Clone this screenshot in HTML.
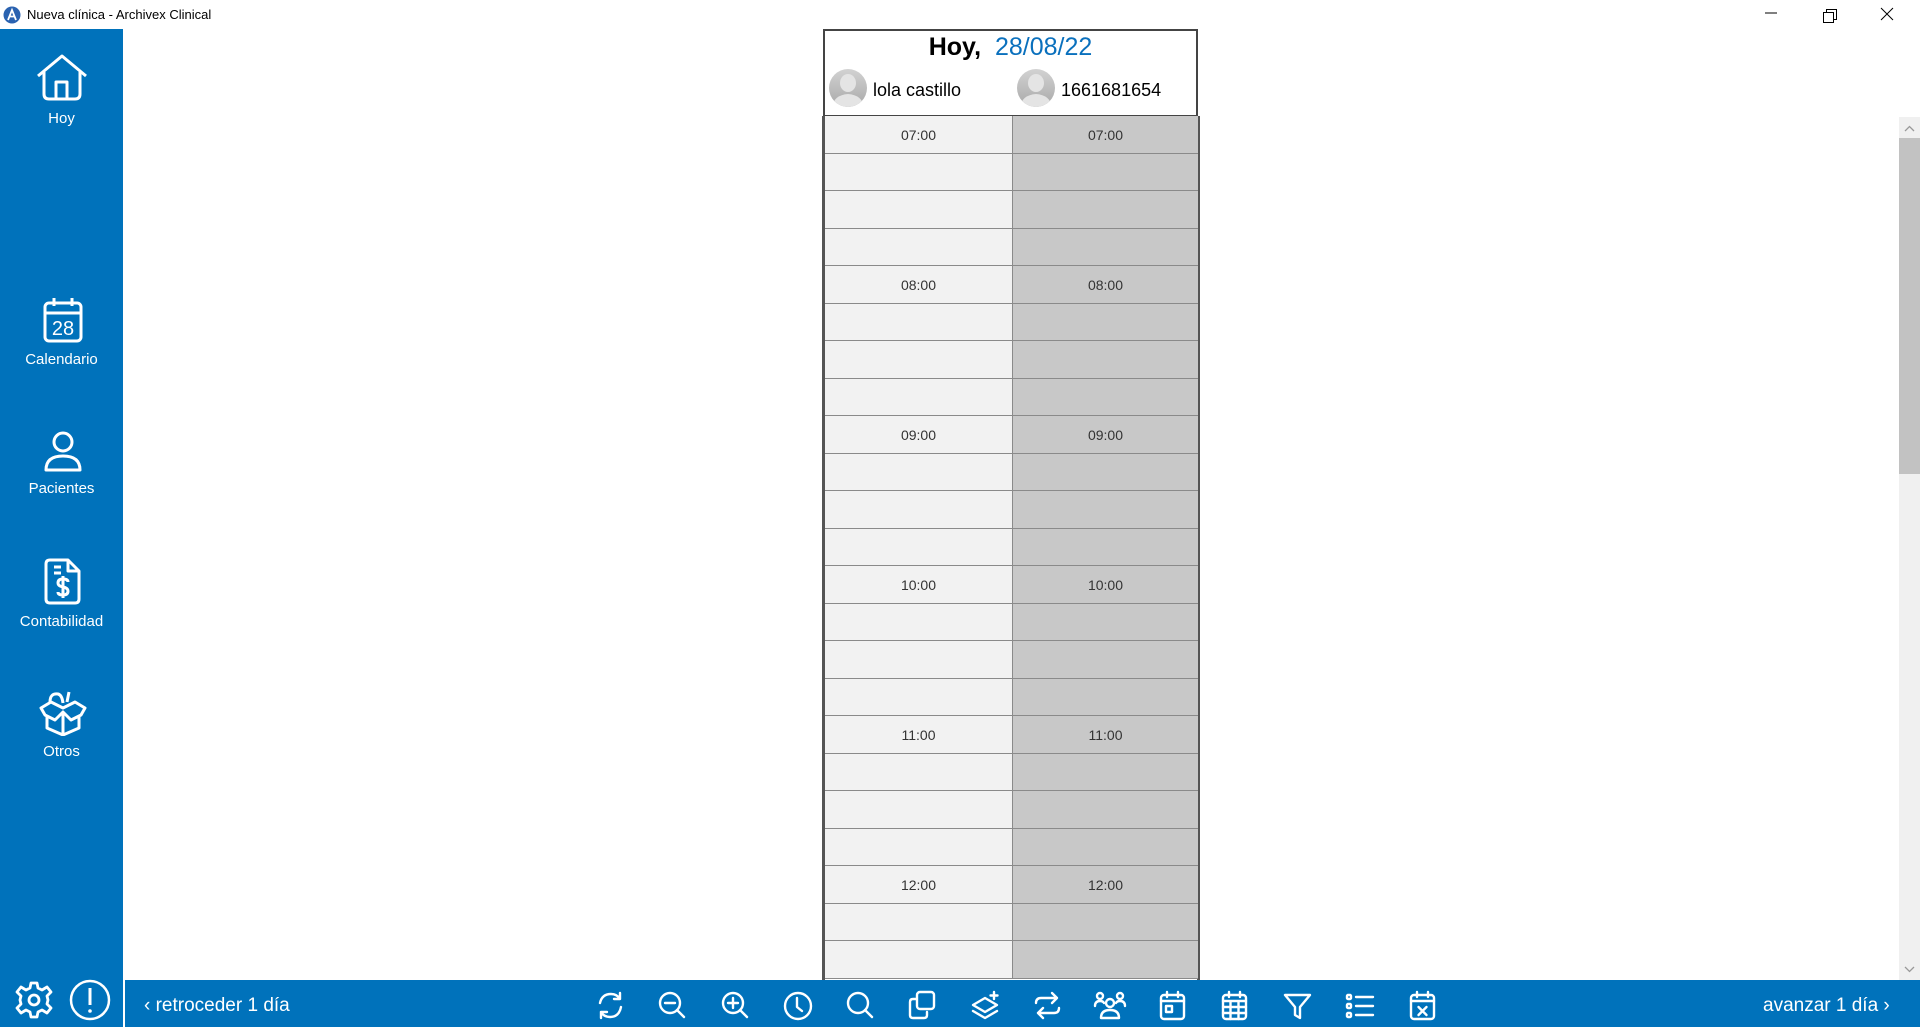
<!DOCTYPE html>
<html><head><meta charset="utf-8"><style>
*{margin:0;padding:0;box-sizing:border-box}
body{width:1920px;height:1027px;position:relative;overflow:hidden;background:#fff;font-family:"Segoe UI","Liberation Sans",sans-serif}
.a{position:absolute}
#side{left:0;top:29px;width:123px;height:998px;background:#0072bb}
.lab{position:absolute;left:0;width:123px;text-align:center;color:#fff;font-size:15px}
#bar{left:125px;top:980px;width:1795px;height:47px;background:#0072bb}
.row{position:absolute;left:825px;width:373px;height:37.5px;border-bottom:1px solid #8a8a8a}
.row .l{position:absolute;left:0;top:0;width:187px;height:100%;background:#f2f2f2}
.row .r{position:absolute;left:187px;top:0;width:186px;height:100%;background:#c8c8c8;border-left:1px solid #8a8a8a}
.row span{position:absolute;width:100%;text-align:center;top:11px;font-size:14px;color:#333}
</style></head><body>
<svg class="a" style="left:3px;top:6px" width="18" height="18" viewBox="0 0 18 18"><circle cx="9" cy="9" r="8.5" fill="#2a62b0"/><path d="M5 14L9 4L13 14M6.5 10.5H11.5" stroke="#fff" stroke-width="1.8" fill="none"/></svg>
<div class="a" style="left:27px;top:7px;font-size:13px;color:#000">Nueva clínica - Archivex Clinical</div>
<svg class="a" style="left:1760px;top:6px" width="160" height="20"><path d="M5 7H17" stroke="#000"/><rect x="63.5" y="6.5" width="10" height="10" fill="none" stroke="#000"/><path d="M66.5 6.5V3.5H76.5V13.5H73.5" fill="none" stroke="#000"/><path d="M121 2L133 14M133 2L121 14" stroke="#000"/></svg>

<div id="side" class="a"></div>
<svg class="a" style="left:36px;top:54px" width="52" height="48" viewBox="0 0 52 48" fill="none" stroke="#fff" stroke-width="3" stroke-linejoin="round"><path d="M2 22L26 2L50 22"/><path d="M8 18V40Q8 45 13 45H39Q44 45 44 40V18"/><path d="M20 45V28H31V45"/></svg>
<div class="lab" style="top:110px">Hoy</div>
<svg class="a" style="left:42px;top:296px" width="42" height="48" viewBox="0 0 42 48" fill="none" stroke="#fff" stroke-width="3"><rect x="3" y="7" width="36" height="38" rx="4"/><path d="M3 17H39M12 2V10M30 2V10"/><text x="21" y="39" text-anchor="middle" fill="#fff" stroke="none" font-size="20" font-family="Liberation Sans">28</text></svg>
<div class="lab" style="top:351px">Calendario</div>
<svg class="a" style="left:44px;top:431px" width="38" height="42" viewBox="0 0 38 42" fill="none" stroke="#fff" stroke-width="3"><circle cx="19" cy="11" r="9"/><path d="M2 39Q2 25 19 25Q36 25 36 39Z" stroke-linejoin="round"/></svg>
<div class="lab" style="top:480px">Pacientes</div>
<svg class="a" style="left:44px;top:558px" width="38" height="48" viewBox="0 0 38 48" fill="none" stroke="#fff" stroke-width="3" stroke-linejoin="round"><path d="M6 2H24L35 13V41Q35 45 31 45H6Q2 45 2 41V6Q2 2 6 2Z"/><path d="M24 2V13H35M10 9H17M10 15H17"/><path d="M24 24Q24 21 19 21Q14 21 14 25Q14 28 19 29Q24 30 24 33Q24 37 19 37Q14 37 14 34M19 18V40"/></svg>
<div class="lab" style="top:613px">Contabilidad</div>
<svg class="a" style="left:38px;top:690px" width="50" height="46" viewBox="0 0 50 46" fill="none" stroke="#fff" stroke-width="3" stroke-linejoin="round"><path d="M12 12Q12 3 20 4Q24 5 25 13M31 2L29 12"/><path d="M3 18L13 12L25 18L37 12L47 18L43 25L33 30L25 22L17 30L7 25Z"/><path d="M9 27V38L25 45L41 38V27M25 22V45"/></svg>
<div class="lab" style="top:743px">Otros</div>
<svg class="a" style="left:14px;top:980px" width="40" height="40" viewBox="0 0 40 40" fill="none" stroke="#fff" stroke-width="2.8" stroke-linejoin="round"><path d="M17 3H23L24 8L28 10L33 7L37 12L33 16L34 20L33 24L37 28L33 33L28 30L24 32L23 37H17L16 32L12 30L7 33L3 28L7 24L6 20L7 16L3 12L7 7L12 10L16 8Z"/><circle cx="20" cy="20" r="5"/></svg>
<svg class="a" style="left:69px;top:979px" width="42" height="42" viewBox="0 0 42 42" fill="none" stroke="#fff" stroke-width="2.5"><circle cx="21" cy="21" r="19"/><path d="M21 9V26" stroke-width="3"/><circle cx="21" cy="32" r="1.8" fill="#fff" stroke="none"/></svg>

<div class="a" style="left:823px;top:29px;width:375px;height:88px;border:2px solid #444;background:#fff"></div>
<div class="a" style="left:823px;top:33px;width:375px;text-align:center;font-size:25px;font-weight:600;color:#000">Hoy,&nbsp; <span style="color:#0a70bd;font-weight:500">28/08/22</span></div>
<svg class="a" style="left:829px;top:69px" width="38" height="38" viewBox="0 0 38 38"><defs><clipPath id="c"><circle cx="19" cy="19" r="19"/></clipPath><linearGradient id="g" x1="0" y1="0" x2="0" y2="1"><stop offset="0" stop-color="#d2d2d2"/><stop offset="1" stop-color="#a9a9a9"/></linearGradient></defs><circle cx="19" cy="19" r="19" fill="url(#g)"/><g clip-path="url(#c)" fill="#e4e4e4"><ellipse cx="19" cy="14" rx="8" ry="9"/><path d="M3 38Q5 26 19 25Q33 26 35 38Z"/></g></svg>
<div class="a" style="left:873px;top:80px;font-size:18px;color:#000">lola castillo</div>
<svg class="a" style="left:1017px;top:69px" width="38" height="38" viewBox="0 0 38 38"><circle cx="19" cy="19" r="19" fill="url(#g)"/><g clip-path="url(#c)" fill="#e4e4e4"><ellipse cx="19" cy="14" rx="8" ry="9"/><path d="M3 38Q5 26 19 25Q33 26 35 38Z"/></g></svg>
<div class="a" style="left:1061px;top:80px;font-size:18px;color:#000">1661681654</div>

<div class="a" style="left:822px;top:116px;width:3px;height:864px;background:#555"></div>
<div class="a" style="left:1197px;top:116px;width:3px;height:864px;background:#555"></div>
<div class="row" style="top:116px"><div class="l"><span>07:00</span></div><div class="r"><span>07:00</span></div></div>
<div class="row" style="top:153.5px"><div class="l"></div><div class="r"></div></div>
<div class="row" style="top:191px"><div class="l"></div><div class="r"></div></div>
<div class="row" style="top:228.5px"><div class="l"></div><div class="r"></div></div>
<div class="row" style="top:266px"><div class="l"><span>08:00</span></div><div class="r"><span>08:00</span></div></div>
<div class="row" style="top:303.5px"><div class="l"></div><div class="r"></div></div>
<div class="row" style="top:341px"><div class="l"></div><div class="r"></div></div>
<div class="row" style="top:378.5px"><div class="l"></div><div class="r"></div></div>
<div class="row" style="top:416px"><div class="l"><span>09:00</span></div><div class="r"><span>09:00</span></div></div>
<div class="row" style="top:453.5px"><div class="l"></div><div class="r"></div></div>
<div class="row" style="top:491px"><div class="l"></div><div class="r"></div></div>
<div class="row" style="top:528.5px"><div class="l"></div><div class="r"></div></div>
<div class="row" style="top:566px"><div class="l"><span>10:00</span></div><div class="r"><span>10:00</span></div></div>
<div class="row" style="top:603.5px"><div class="l"></div><div class="r"></div></div>
<div class="row" style="top:641px"><div class="l"></div><div class="r"></div></div>
<div class="row" style="top:678.5px"><div class="l"></div><div class="r"></div></div>
<div class="row" style="top:716px"><div class="l"><span>11:00</span></div><div class="r"><span>11:00</span></div></div>
<div class="row" style="top:753.5px"><div class="l"></div><div class="r"></div></div>
<div class="row" style="top:791px"><div class="l"></div><div class="r"></div></div>
<div class="row" style="top:828.5px"><div class="l"></div><div class="r"></div></div>
<div class="row" style="top:866px"><div class="l"><span>12:00</span></div><div class="r"><span>12:00</span></div></div>
<div class="row" style="top:903.5px"><div class="l"></div><div class="r"></div></div>
<div class="row" style="top:941px"><div class="l"></div><div class="r"></div></div>

<div class="a" style="left:1899px;top:117px;width:21px;height:863px;background:#f0f0f0"></div>
<div class="a" style="left:1899px;top:138px;width:21px;height:336px;background:#c2c2c2"></div>
<svg class="a" style="left:1899px;top:117px" width="21" height="863"><path d="M6 14L10.5 9.5L15 14" stroke="#999" fill="none" stroke-width="1.3"/><path d="M6 850L10.5 854.5L15 850" stroke="#999" fill="none" stroke-width="1.3"/></svg>

<div id="bar" class="a"></div>
<div class="a" style="left:144px;top:995px;font-size:19px;color:#fff">&lsaquo; retroceder 1 día</div>
<div class="a" style="left:1763px;top:995px;font-size:19px;color:#fff">avanzar 1 día &rsaquo;</div>
<svg class="a" style="left:591px;top:987px" width="850" height="36" viewBox="0 0 850 36" fill="none" stroke="#fff" stroke-width="2.4" stroke-linecap="round" stroke-linejoin="round">
<g transform="translate(4,3)"><path d="M5 13Q7 4 16 4Q22 4 25 9M25 3V9H19"/><path d="M26 17Q24 27 15 27Q9 27 6 22M6 28V22H12"/></g>
<g transform="translate(66,3)"><circle cx="13" cy="13" r="10"/><path d="M8 13H18M20 20L27 27"/></g>
<g transform="translate(129,3)"><circle cx="13" cy="13" r="10"/><path d="M8 13H18M13 8V18M20 20L27 27"/></g>
<g transform="translate(191,3)"><circle cx="16" cy="16" r="13"/><path d="M15 8V17L20 21"/></g>
<g transform="translate(254,3)"><circle cx="13" cy="13" r="10"/><path d="M20 20L27 27"/></g>
<g transform="translate(316,3)"><rect x="10" y="2" width="17" height="17" rx="3"/><path d="M9 9H6Q3 9 3 12V25Q3 28 6 28H17Q20 28 20 25V22"/></g>
<g transform="translate(379,3)"><path d="M3 15L15 8L27 15L15 22Z"/><path d="M3 21L15 28L27 21"/><path d="M24 2V9M20.5 5.5H27.5"/></g>
<g transform="translate(441,3)"><path d="M4 13Q4 8 9 8H25M20 3L25 8L20 13"/><path d="M27 18Q27 23 22 23H6M11 18L6 23L11 28"/></g>
<g transform="translate(503,3)"><circle cx="16" cy="13" r="4"/><circle cx="6" cy="6" r="3"/><circle cx="26" cy="6" r="3"/><path d="M7 28Q7 20 16 20Q25 20 25 28Z"/><path d="M1 16Q1 11 6 11Q9 11 10 13M31 16Q31 11 26 11Q23 11 22 13"/></g>
<g transform="translate(566,3)"><rect x="4" y="5" width="23" height="24" rx="3"/><path d="M4 11H27M10 2V7M21 2V7"/><rect x="9" y="16" width="6" height="6"/></g>
<g transform="translate(628,3)"><rect x="4" y="5" width="23" height="24" rx="3"/><path d="M4 11H27M10 2V7M21 2V7M4 17H27M4 23H27M11.5 11V29M19.5 11V29"/></g>
<g transform="translate(691,3)"><path d="M3 5H28L18 17V28L13 25V17Z"/></g>
<g transform="translate(753,3)"><rect x="3" y="5" width="4" height="4" rx="1"/><rect x="3" y="14" width="4" height="4" rx="1"/><rect x="3" y="23" width="4" height="4" rx="1"/><path d="M12 7H29M12 16H29M12 25H29"/></g>
<g transform="translate(816,3)"><rect x="4" y="5" width="23" height="24" rx="3"/><path d="M4 11H27M10 2V7M21 2V7M11.5 17L19.5 25M19.5 17L11.5 25"/></g>
</svg>
</body></html>
